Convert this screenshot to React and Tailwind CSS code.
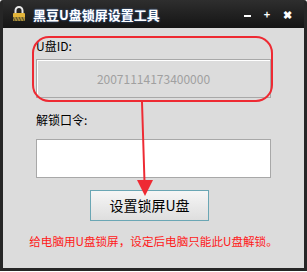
const cjk = { fontFamily: '"Noto Sans CJK SC", "Noto Sans", sans-serif' };

function LockIcon() {
  return (
    <svg width="14" height="16" viewBox="0 0 14 16">
      <path d="M3.5 7 V4.5 a3.5 3.5 0 0 1 7 0 V7" fill="none" stroke="#e8e8e8" strokeWidth="2" />
      <rect x="1" y="7" width="12" height="8" rx="1" fill="#e3b53a" />
      <rect x="1" y="11" width="12" height="4" fill="#8a7a3a" opacity="0.6" />
      <path d="M1 11 l2 4 M4 11 l2 4 M7 11 l2 4 M10 11 l2 4" stroke="#3b3b2a" strokeWidth="0.8" />
    </svg>
  );
}

function Annotation() {
  return (
    <svg className="pointer-events-none absolute left-0 top-0" width="307" height="272">
      <rect x="33" y="37" width="239" height="64" rx="16" fill="none" stroke="#ee2a33" strokeWidth="2" />
      <line x1="142" y1="102" x2="144.5" y2="182" stroke="#ee2a33" strokeWidth="2" />
      <polygon points="137,180 153,180 145,196" fill="#ee2a33" />
    </svg>
  );
}

export default function App() {
  return (
    <div className="relative h-[272px] w-[307px] bg-white" style={cjk}>
      <div className="flex h-[271px] w-[307px] flex-col rounded-t-[3px] bg-[#262626] px-[3px] pb-[3px]">
        <div className="flex h-[28px] shrink-0 items-center bg-gradient-to-b from-[#2e2e2e] to-[#151515] pl-[9px] pr-[7px]">
          <LockIcon />
          <span className="ml-[7px] text-[13px] font-bold leading-none text-white [text-shadow:0_0_2px_#4a7cc8]">
            黑豆U盘锁屏设置工具
          </span>
          <div className="ml-auto flex items-center text-[11px] font-bold leading-none text-white">
            <span className="flex w-[20px] justify-center">
              <span className="block h-[2px] w-[7px] translate-y-[2px] bg-white" />
            </span>
            <span className="flex w-[20px] justify-center">+</span>
            <span className="flex w-[20px] justify-center">✖</span>
          </div>
        </div>
        <div className="flex flex-1 flex-col bg-[#dcdcdc] px-[33px] pt-[12px]">
          <div className="text-[12px] leading-[12px] text-black">U盘ID:</div>
          <div className="mt-[7px] flex h-[39px] items-center justify-center border border-[#a8a8a8] bg-[#dcdcdc] text-[12px] text-[#a0a0a0] shadow-[inset_1px_1px_0_#fff]">
            20071114173400000
          </div>
          <div className="mt-[16px] text-[12px] leading-[12px] text-black">解锁口令:</div>
          <div className="mt-[13px] h-[39px] border border-[#a8a8a8] bg-white" />
          <button
            type="button"
            className="ml-[54px] mt-[12px] flex h-[31px] w-[119px] items-center justify-center border border-[#6aa6b4] bg-gradient-to-b from-[#f6f6f6] to-[#dedede] text-[14px] text-black"
          >
            设置锁屏U盘
          </button>
          <div className="-mx-[10px] mt-[14px] whitespace-nowrap text-center text-[11.6px] leading-[12px] text-[#ff1a1a]">
            给电脑用U盘锁屏，设定后电脑只能此U盘解锁。
          </div>
        </div>
      </div>
      <Annotation />
    </div>
  );
}
